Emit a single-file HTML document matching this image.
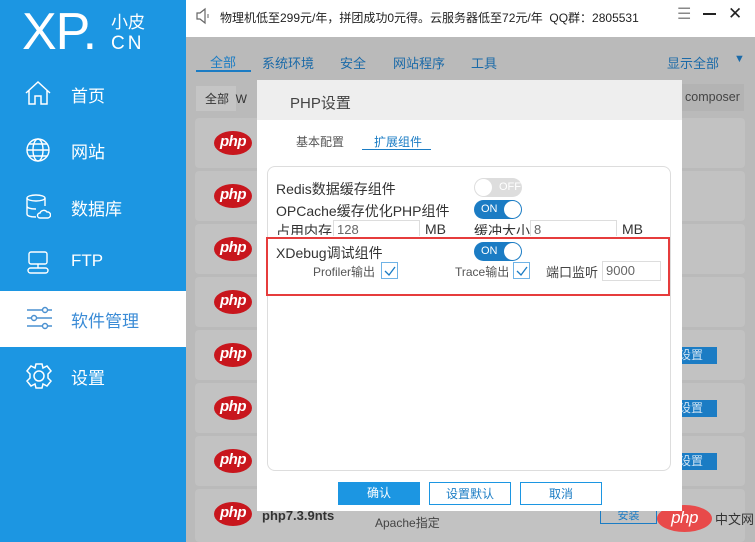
<!DOCTYPE html>
<html><head><meta charset="utf-8"><style>
*{margin:0;padding:0;box-sizing:border-box}
body{width:755px;height:542px;overflow:hidden;position:relative;font-family:"Liberation Sans","Noto Sans CJK SC",sans-serif;background:#bababa}
.a{position:absolute;white-space:nowrap}
#side{left:0;top:0;width:186px;height:542px;background:#1c96e2}
.nav{color:#fff;font-size:17px;left:71px}
.row{position:absolute;left:195px;width:550px;height:50px;background:#c2c2c2;border-radius:4px}
.php{position:absolute;width:38px;height:24px;border-radius:50%;background:#c8161d;color:#fff;font:italic bold 15px "Liberation Sans",sans-serif;text-align:center;line-height:22px;letter-spacing:-0.5px}
.sb{position:absolute;left:676px;width:41px;height:17px;background:#1b7cc4;color:#cfe3f3;font-size:12px;line-height:17px;padding-left:3px}
.tg{position:absolute;width:48px;height:19px;border-radius:10px;font-size:11px;line-height:19px;color:#fff}
.tg i{position:absolute;top:1px;width:17px;height:17px;border-radius:50%;background:#fff}
.inp{position:absolute;height:20px;border:1px solid #ddd;background:#fff;font-size:13px;color:#666;padding-left:3px;line-height:18px}
.cb{position:absolute;width:17px;height:17px;border:1px solid #6fb3e6}
.btn{position:absolute;top:482px;width:82px;height:23px;font-size:12px;text-align:center;line-height:22px}
</style></head><body>
<div class="a" style="left:186px;top:0;width:569px;height:37px;background:#fff"></div>
<svg class="a" style="left:195px;top:7px" width="16" height="18" viewBox="0 0 16 18"><path d="M2 6h3l5-4v14l-5-4H2z" fill="none" stroke="#666" stroke-width="1.2"/><path d="M13 7v4" stroke="#666"/></svg>
<div class="a" style="left:220px;top:9px;font-size:12px;color:#222">物理机低至299元/年，拼团成功0元得。云服务器低至72元/年&nbsp; QQ群：2805531</div>
<div class="a" style="left:677px;top:4px;font-size:16px;color:#888">☰</div>
<div class="a" style="left:703px;top:13px;width:13px;height:2px;background:#222"></div>
<div class="a" style="left:728px;top:4px;font-size:17px;color:#222">✕</div>

<div class="a" style="left:210px;top:52px;font-size:13px;color:#1b7cc4">全部</div>
<div class="a" style="left:196px;top:70px;width:55px;height:2px;background:#1b7cc4"></div>
<div class="a" style="left:262px;top:53px;font-size:13px;color:#1b6aa8">系统环境</div>
<div class="a" style="left:340px;top:53px;font-size:13px;color:#1b6aa8">安全</div>
<div class="a" style="left:393px;top:53px;font-size:13px;color:#1b6aa8">网站程序</div>
<div class="a" style="left:471px;top:53px;font-size:13px;color:#1b6aa8">工具</div>
<div class="a" style="left:667px;top:53px;font-size:13px;color:#1b6aa8">显示全部</div>
<div class="a" style="left:734px;top:53px;font-size:11px;color:#1b6aa8">▼</div>
<div class="a" style="left:196px;top:86px;width:40px;height:25px;background:#c5c5c5"></div>
<div class="a" style="left:205px;top:90px;font-size:12px;color:#333">全部 &nbsp;W</div>
<div class="a" style="left:682px;top:84px;width:62px;height:27px;background:#b3b3b3"></div>
<div class="a" style="left:685px;top:90px;font-size:12.5px;color:#444">composer</div>

<div class="row" style="top:118px"></div><div class="row" style="top:171px"></div><div class="row" style="top:224px"></div><div class="row" style="top:277px"></div><div class="row" style="top:330px"></div><div class="row" style="top:383px"></div><div class="row" style="top:436px"></div><div class="row" style="top:489px;height:53px"></div>
<div class="php" style="left:214px;top:131px">php</div><div class="php" style="left:214px;top:184px">php</div><div class="php" style="left:214px;top:237px">php</div><div class="php" style="left:214px;top:290px">php</div><div class="php" style="left:214px;top:343px">php</div><div class="php" style="left:214px;top:396px">php</div><div class="php" style="left:214px;top:449px">php</div><div class="php" style="left:214px;top:502px">php</div>
<div class="sb" style="top:347px">设置</div><div class="sb" style="top:400px">设置</div><div class="sb" style="top:453px">设置</div>
<div class="a" style="left:262px;top:508px;font-size:13px;font-weight:bold;color:#333">php7.3.9nts</div>
<div class="a" style="left:375px;top:514px;font-size:12px;color:#444">Apache指定</div>
<div class="a" style="left:600px;top:508px;width:57px;height:16px;border:1px solid #1b7cc4;font-size:11px;color:#1b7cc4;text-align:center;line-height:14px">安装</div>
<div class="php" style="left:657px;top:505px;width:55px;height:27px;background:#e84a4a;font-size:17px;line-height:26px;font-style:italic;font-weight:normal">php</div>
<div class="a" style="left:715px;top:509px;font-size:13px;color:#333">中文网</div>

<!-- modal -->
<div class="a" style="left:257px;top:80px;width:425px;height:431px;background:#fff"></div>
<div class="a" style="left:257px;top:80px;width:425px;height:40px;background:#eeeeee"></div>
<div class="a" style="left:290px;top:92px;font-size:15px;color:#444">PHP设置</div>
<div class="a" style="left:296px;top:133px;font-size:12px;color:#555">基本配置</div>
<div class="a" style="left:374px;top:133px;font-size:12px;color:#1b7cc4">扩展组件</div>
<div class="a" style="left:362px;top:149px;width:69px;height:1px;background:#1b7cc4"></div>
<div class="a" style="left:267px;top:166px;width:404px;height:305px;border:1px solid #ddd;border-radius:8px"></div>
<div class="a" style="left:276px;top:179px;font-size:14px;color:#333">Redis数据缓存组件</div>
<div class="tg" style="left:474px;top:178px;background:#ddd;color:#fff;padding-left:25px">OFF<i style="left:1px"></i></div>
<div class="a" style="left:276px;top:201px;font-size:14px;color:#333">OPCache缓存优化PHP组件</div>
<div class="tg" style="left:474px;top:200px;background:#1b7cc4;padding-left:7px">ON<i style="right:1px"></i></div>
<div class="a" style="left:276px;top:221px;font-size:14px;color:#333;height:14px;overflow:hidden">占用内存</div>
<div class="inp" style="left:333px;top:220px;width:87px;height:16px;border-bottom:none">128</div>
<div class="a" style="left:425px;top:221px;font-size:14px;color:#333;height:14px;overflow:hidden">MB</div>
<div class="a" style="left:474px;top:221px;font-size:14px;color:#333;height:14px;overflow:hidden">缓冲大小</div>
<div class="inp" style="left:530px;top:220px;width:87px;height:16px;border-bottom:none">8</div>
<div class="a" style="left:622px;top:221px;font-size:14px;color:#333;height:14px;overflow:hidden">MB</div>
<div class="a" style="left:266px;top:237px;width:404px;height:59px;border:2px solid #e63c3c"></div>
<div class="a" style="left:276px;top:243px;font-size:14px;color:#333">XDebug调试组件</div>
<div class="tg" style="left:474px;top:242px;background:#1b7cc4;padding-left:7px">ON<i style="right:1px"></i></div>
<div class="a" style="left:313px;top:263px;font-size:12px;color:#555">Profiler输出</div>
<div class="cb" style="left:381px;top:262px"></div>
<svg class="a" style="left:383px;top:264px" width="14" height="14"><path d="M2 7l4 4 6-8" fill="none" stroke="#1b7cc4" stroke-width="1.3"/></svg>
<div class="a" style="left:455px;top:263px;font-size:12px;color:#555">Trace输出</div>
<div class="cb" style="left:513px;top:262px"></div>
<svg class="a" style="left:515px;top:264px" width="14" height="14"><path d="M2 7l4 4 6-8" fill="none" stroke="#1b7cc4" stroke-width="1.3"/></svg>
<div class="a" style="left:546px;top:262px;font-size:13px;color:#444">端口监听</div>
<div class="inp" style="left:602px;top:261px;width:59px">9000</div>
<div class="btn" style="left:338px;background:#1c96e2;color:#fff">确认</div>
<div class="btn" style="left:429px;border:1px solid #1c96e2;color:#1b7cc4">设置默认</div>
<div class="btn" style="left:520px;border:1px solid #1c96e2;color:#1b7cc4">取消</div>

<!-- sidebar -->
<div class="a" id="side"></div>
<div class="a" style="left:22px;top:2px;font-size:52px;line-height:60px;color:#fff;letter-spacing:-1px">XP.</div>
<div class="a" style="left:111px;top:8px;font-size:17px;color:#fff">小皮</div>
<div class="a" style="left:111px;top:33px;font-size:19px;color:#fff;letter-spacing:3px">CN</div>
<div class="a" style="left:0;top:291px;width:186px;height:56px;background:#fff"></div>
<svg class="a" style="left:24px;top:80px" width="28" height="26" viewBox="0 0 28 26" fill="none" stroke="#fff" stroke-width="1.5"><path d="M2 13L14 2l12 11M5 10v14h6v-8h6v8h6V10"/></svg>
<div class="a nav" style="top:82px">首页</div>
<svg class="a" style="left:25px;top:137px" width="26" height="26" viewBox="0 0 26 26" fill="none" stroke="#fff" stroke-width="1.4"><circle cx="13" cy="13" r="11"/><ellipse cx="13" cy="13" rx="5" ry="11"/><path d="M2 13h22M4 7h18M4 19h18"/></svg>
<div class="a nav" style="top:138px">网站</div>
<svg class="a" style="left:25px;top:193px" width="26" height="28" viewBox="0 0 26 28" fill="none" stroke="#fff" stroke-width="1.4"><ellipse cx="11" cy="5" rx="9" ry="3"/><path d="M2 5v16c0 2 4 3 9 3M20 5v8M2 13c0 2 4 3 9 3"/><path d="M15 25h8a3 3 0 0 0-1-6 4 4 0 0 0-7 1 2.5 2.5 0 0 0 0 5z"/></svg>
<div class="a nav" style="top:195px">数据库</div>
<svg class="a" style="left:26px;top:250px" width="24" height="26" viewBox="0 0 24 26" fill="none" stroke="#fff" stroke-width="1.4"><rect x="3" y="2" width="18" height="12" rx="2"/><path d="M12 14v4"/><rect x="2" y="18" width="20" height="5" rx="2.5"/></svg>
<div class="a nav" style="top:251px">FTP</div>
<svg class="a" style="left:26px;top:306px" width="26" height="24" viewBox="0 0 26 24" fill="none" stroke="#4a90d0" stroke-width="1.4"><path d="M1 4h25M1 12h25M1 20h25"/><circle cx="19" cy="4" r="2.5" fill="#fff"/><circle cx="8" cy="12" r="2.5" fill="#fff"/><circle cx="19" cy="20" r="2.5" fill="#fff"/></svg>
<div class="a nav" style="top:307px;color:#3a8bd6">软件管理</div>
<svg class="a" style="left:25px;top:362px" width="28" height="28" viewBox="0 0 28 28" fill="none" stroke="#fff" stroke-width="1.5"><path d="M11 2h6l1 4 4-2 4 5-3 3v4l3 3-4 5-4-2-1 4h-6l-1-4-4 2-4-5 3-3v-4L2 9l4-5 4 2z"/><circle cx="14" cy="14" r="5"/></svg>
<div class="a nav" style="top:364px">设置</div>
</body></html>
